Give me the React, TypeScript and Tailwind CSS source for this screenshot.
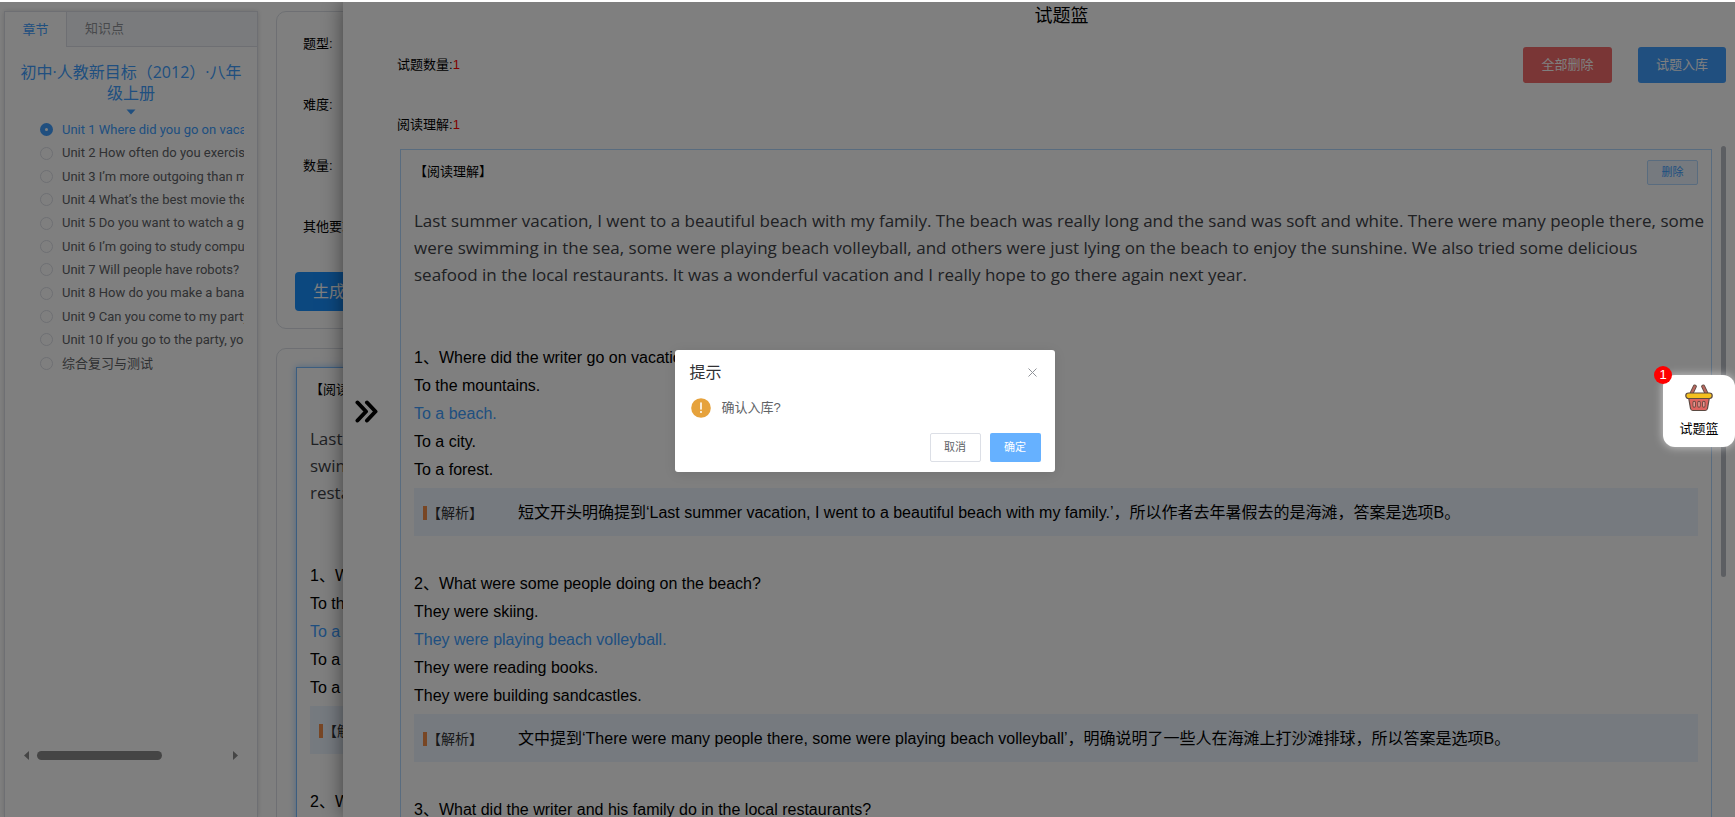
import React from 'react';

interface Question {
  title: string;
  options: string[];
  answer: number;
  analysis: string;
}

const UNITS = [
  'Unit 1 Where did you go on vacation?',
  'Unit 2 How often do you exercise?',
  'Unit 3 I’m more outgoing than my sister.',
  'Unit 4 What’s the best movie theater?',
  'Unit 5 Do you want to watch a game show?',
  'Unit 6 I’m going to study computer science.',
  'Unit 7 Will people have robots?',
  'Unit 8 How do you make a banana milk shake?',
  'Unit 9 Can you come to my party?',
  'Unit 10 If you go to the party, you’ll have a great time!',
  '综合复习与测试',
];

const PASSAGE =
  'Last summer vacation, I went to a beautiful beach with my family. The beach was really long and the sand was soft and white. There were many people there, some were swimming in the sea, some were playing beach volleyball, and others were just lying on the beach to enjoy the sunshine. We also tried some delicious seafood\u00a0in the local restaurants. It was a wonderful vacation and I really hope to go there again next year.';

const QUESTIONS: Question[] = [
  {
    title: 'Where did the writer go on vacation?',
    options: ['To the mountains.', 'To a beach.', 'To a city.', 'To a forest.'],
    answer: 1,
    analysis:
      '短文开头明确提到‘Last summer vacation, I went to a beautiful beach with my family.’，所以作者去年暑假去的是海滩，答案是选项B。',
  },
  {
    title: 'What were some people doing on the beach?',
    options: ['They were skiing.', 'They were playing beach volleyball.', 'They were reading books.', 'They were building sandcastles.'],
    answer: 1,
    analysis:
      '文中提到‘There were many people there, some were playing beach volleyball’，明确说明了一些人在海滩上打沙滩排球，所以答案是选项B。',
  },
  {
    title: 'What did the writer and his family do in the local restaurants?',
    options: [],
    answer: -1,
    analysis: '',
  },
];

const FORM_LABELS = ['题型:', '难度:', '数量:', '其他要求:'];

const QuestionBlock: React.FC<{ index: number; question: Question }> = ({ index, question }) => (
  <section className="mb-[34px] text-[16px] leading-[28px] text-black">
    <p>{index + 1}、{question.title}</p>
    {question.options.map((option, i) => (
      <p key={option} className={i === question.answer ? 'text-[#409eff]' : ''}>
        {option}
      </p>
    ))}
    {question.analysis && (
      <div className="mt-1 flex h-12 items-center overflow-hidden bg-[#ecf5ff] pt-[2px] pl-[9px]">
        <span className="h-[14px] w-1 shrink-0 bg-[#f08d49]" />
        <span className="w-[91px] shrink-0 text-[14px] text-[#303133]">【解析】</span>
        <span className="truncate">{question.analysis}</span>
      </div>
    )}
  </section>
);

const QuestionCard: React.FC<{ className?: string; removable?: boolean }> = ({ className = '', removable }) => (
  <article className={`border px-[13px] pt-[9px] ${className}`}>
    <header className="flex h-[26px] items-center justify-between">
      <h3 className="text-[13px] text-black">【阅读理解】</h3>
      {removable && (
        <button className="h-[25px] w-[51px] rounded-xs border border-[#b3d8ff] bg-[#ecf5ff] text-[11px] text-[#409eff]">
          删除
        </button>
      )}
    </header>
    <p className="mt-[22px] -mr-2 mb-14 font-['Open_Sans','Noto_Sans_CJK_SC',sans-serif] text-[17px] leading-[27px] text-[#404247]">
      {PASSAGE}
    </p>
    {QUESTIONS.map((q, i) => (
      <QuestionBlock key={q.title} index={i} question={q} />
    ))}
  </article>
);

const Sidebar: React.FC = () => (
  <aside className="flex w-[254px] shrink-0 flex-col border border-b-0 border-[#dcdfe6] bg-white shadow-[0_0_5px_rgba(0,0,0,0.15)]">
    <div role="tablist" className="flex h-[35px] text-[13px]">
      <button role="tab" aria-selected="true" className="w-[62px] border-r border-[#dcdfe6] text-[#409eff]">
        章节
      </button>
      <button role="tab" aria-selected="false" className="flex-1 border-b border-[#dcdfe6] bg-[#f5f7fa] pl-[18px] text-left text-[#909399]">
        知识点
      </button>
    </div>
    <div className="flex min-h-0 flex-1 flex-col px-[13px] pt-[15px]">
      <h2 className="text-center font-['Open_Sans','Noto_Sans_CJK_SC',sans-serif] text-[16px] leading-[21px] text-[#409eff] [text-spacing-trim:space-all]">
        初中·人教新目标（2012）·八年级上册
      </h2>
      <svg className="mt-[5px] h-[6px] w-[10px] self-center" viewBox="0 0 10 6" fill="#409eff">
        <path d="M0.5 0.5h9L5 5.5z" />
      </svg>
      <div className="mt-[3px] grid h-[257px] auto-rows-fr">
        {UNITS.map((unit, i) => (
          <label key={unit} className={`flex items-center overflow-hidden pl-[22px] font-[Roboto,'Noto_Sans_CJK_SC',sans-serif] text-[13px] whitespace-nowrap ${i === 0 ? 'text-[#409eff]' : 'text-[#606266]'}`}>
            <input
              type="radio"
              name="unit"
              defaultChecked={i === 0}
              className="mr-[9px] size-[13px] shrink-0 appearance-none rounded-full border border-[#dcdfe6] bg-white checked:border-[5px] checked:border-[#409eff]"
            />
            {unit}
          </label>
        ))}
      </div>
      <div className="mt-auto mr-[6px] mb-[57px] ml-[6px] flex h-[9px] items-center justify-between">
        <svg className="h-[9px] w-[5px]" viewBox="0 0 5 9" fill="#8b8b8b">
          <path d="M5 0v9L0 4.500z" />
        </svg>
        <div className="mx-2 flex-1">
          <div className="h-[9px] w-2/3 rounded-full bg-[#8b8b8b]" />
        </div>
        <svg className="h-[9px] w-[5px]" viewBox="0 0 5 9" fill="#8b8b8b">
          <path d="M0 0v9L5 4.500z" />
        </svg>
      </div>
    </div>
  </aside>
);

const BasketIcon: React.FC = () => (
  <svg className="size-7" viewBox="0 0 28 28" fill="none" strokeLinecap="round" strokeLinejoin="round">
    <path d="M3.500 13h21l-2 11.500a2.500 2.500 0 0 1-2.500 2H8a2.500 2.500 0 0 1-2.500-2z" fill="#dd6460" stroke="#5b4a42" strokeWidth="1.200" />
    <path d="M9.800 2.500 6.500 9.500M18.200 2.500l3.300 7" stroke="#5b4a42" strokeWidth="4" />
    <path d="M9.800 2.500 6.500 9.500M18.200 2.500l3.300 7" stroke="#b9685f" strokeWidth="2.200" />
    <rect x="0.800" y="9" width="26.400" height="5.500" rx="2.700" fill="#f4c01f" stroke="#5b4a42" strokeWidth="1.200" />
    <path d="M9.200 18.500v3.500M14 18.500v3.500M18.800 18.500v3.500" stroke="#6b4a42" strokeWidth="3.400" />
    <path d="M9.200 18.500v3.500M14 18.500v3.500M18.800 18.500v3.500" stroke="#e59a94" strokeWidth="1.600" />
  </svg>
);

const BasketDrawer: React.FC = () => (
  <div className="absolute inset-y-0 right-0 left-[343px] flex bg-white shadow-[0_0_20px_rgba(0,0,0,0.5)]">
    <button aria-label="收起" className="flex w-[54px] shrink-0 items-center pt-[3px] pl-3">
      <svg className="size-[23px]" viewBox="0 0 23 23" fill="none" stroke="#000" strokeWidth="4" strokeLinecap="round" strokeLinejoin="round">
        <path d="M2.500 2.500 11 11.500 2.500 20.500M12 2.500l8.500 9-8.500 9" />
      </svg>
    </button>
    <div className="flex min-w-0 flex-1 flex-col pr-[9px]">
      <h1 className="h-[26px] text-center text-[18px] leading-[28px] text-black">试题篮</h1>
      <div className="mt-[19px] flex h-9 items-center gap-[26px] text-[13px]">
        <p className="flex-1 text-black">
          试题数量:<span className="text-[#f00]">1</span>
        </p>
        <button className="h-9 w-[89px] rounded-[3px] bg-[#f56c6c] text-white">全部删除</button>
        <button className="h-9 w-[88px] rounded-[3px] bg-[#409eff] text-white">试题入库</button>
      </div>
      <p className="mt-8 text-[13px] leading-5 text-black">
        阅读理解:<span className="text-[#f00]">1</span>
      </p>
      <div className="mt-[11px] flex min-h-0 flex-1 gap-[9px] overflow-hidden pl-[3px]">
        <QuestionCard removable className="mt-[3px] min-w-0 flex-1 self-start border-[#b3d8ff]" />
        <div className="h-[431px] w-[5px] rounded-full bg-[#b9bdc4]" />
      </div>
    </div>
  </div>
);

const ConfirmDialog: React.FC = () => (
  <div role="dialog" aria-label="提示" className="w-[380px] rounded-[3px] bg-white pt-[13px] pr-[14px] pb-[10px] pl-[15px] shadow-[0_2px_12px_rgba(0,0,0,0.1)]">
    <div className="flex h-5 items-center justify-between">
      <h2 className="text-[16px] text-[#303133]">提示</h2>
      <button aria-label="关闭" className="p-1">
        <svg className="size-[9px]" viewBox="0 0 9 9" stroke="#909399" strokeWidth="1">
          <path d="M0.500 0.500l8 8M8.500 0.500l-8 8" />
        </svg>
      </button>
    </div>
    <div className="mt-[15px] flex h-5 items-center gap-[11px] pl-px text-[13px] text-[#606266]">
      <svg className="size-5" viewBox="0 0 20 20">
        <circle cx="10" cy="10" r="9.800" fill="#e6a23c" />
        <path d="M10 5v6" stroke="#fff" strokeWidth="1.600" strokeLinecap="round" />
        <circle cx="10" cy="14" r="1" fill="#fff" />
      </svg>
      <p>确认入库?</p>
    </div>
    <div className="mt-[15px] flex justify-end gap-[9px] text-[11px]">
      <button className="h-[29px] w-[51px] rounded-xs border border-[#dcdfe6] bg-white text-[#606266]">取消</button>
      <button className="h-[29px] w-[51px] rounded-xs bg-[#66b1ff] text-white">确定</button>
    </div>
  </div>
);

export default function App() {
  return (
    <div className="relative h-screen overflow-hidden bg-white pt-[2px] font-['Liberation_Sans','Noto_Sans_CJK_SC',sans-serif]">
      <div className="relative h-full overflow-hidden">
        <div className="flex h-full gap-[18px] pt-[9px] pr-[10px] pl-1">
          <Sidebar />
          <main className="flex min-w-0 flex-1 flex-col gap-[19px]">
            <section className="shrink-0 rounded-[10px] border border-[#dcdfe6] px-[18px] pb-[17px]">
              <div className="flex h-[260px] flex-col gap-[41px] pt-[22px] pl-2 text-[13px] leading-5 text-black">
                {FORM_LABELS.map(label => (
                  <p key={label}>{label}</p>
                ))}
              </div>
              <button className="h-[39px] rounded-[4px] bg-[#1890ff] px-[18px] text-[16px] text-white">生成试题</button>
            </section>
            <section className="shrink-0 rounded-[10px] border border-[#dcdfe6] px-[19px] pt-[18px]">
              <QuestionCard className="border-[#79bbff] shadow-[0_0_7px_rgba(64,158,255,0.5)]" />
            </section>
          </main>
        </div>
        <BasketDrawer />
        <div className="absolute inset-0 flex items-center justify-center bg-black/50 pt-[2px] pr-[6px]">
          <ConfirmDialog />
        </div>
        <button className="absolute top-[373px] right-0 flex h-[72px] w-[72px] flex-col items-center rounded-[12px] bg-white pt-[9px] text-[13px] text-black shadow-[0_0_10px_rgba(255,255,255,0.6)]">
          <BasketIcon />
          <span className="mt-[7px] leading-5">试题篮</span>
          <span className="absolute -top-[9px] -left-[9px] size-[18px] rounded-full bg-[#f00] text-[13px] leading-[18px] text-white">1</span>
        </button>
      </div>
    </div>
  );
}
